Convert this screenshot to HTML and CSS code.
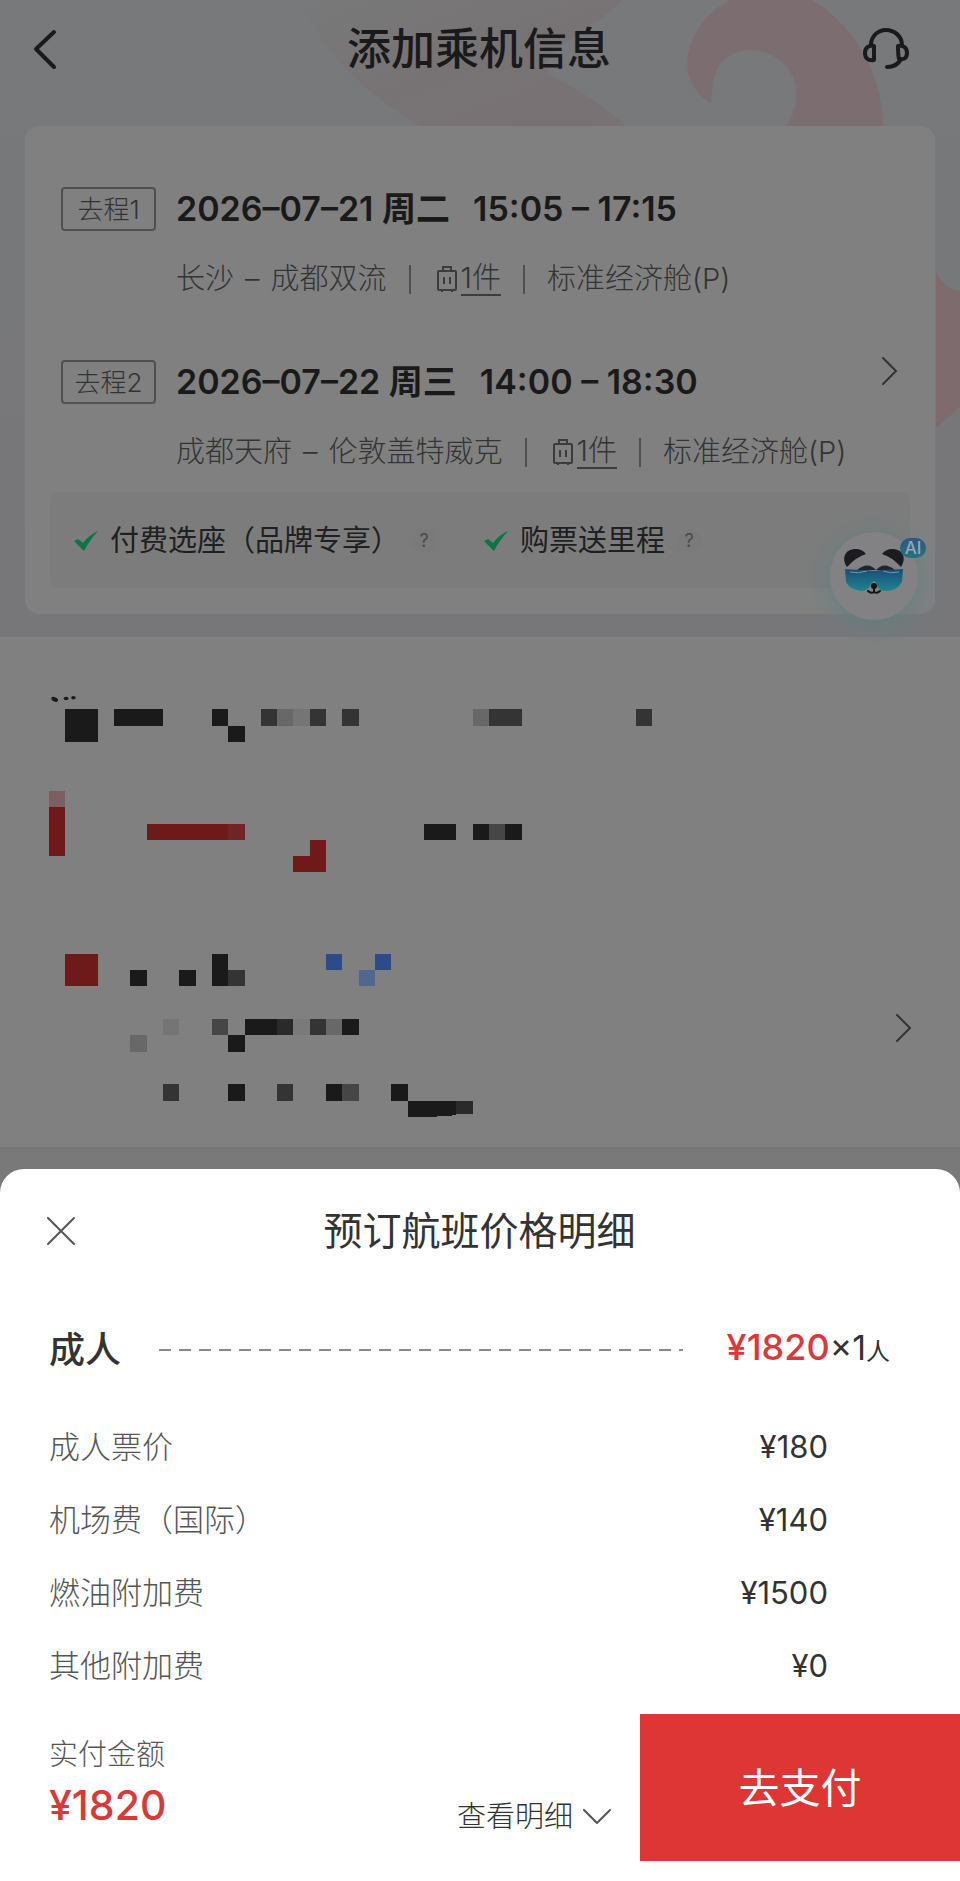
FILE: index.html
```html
<!DOCTYPE html>
<html lang="zh-CN">
<head>
<meta charset="utf-8">
<meta name="viewport" content="width=device-width, initial-scale=1">
<title>添加乘机信息</title>
<link rel="stylesheet" href="styles.css">
</head>
<body>
<div class="app">
  <div class="hero">
    <svg class="hero-art" viewBox="0 0 960 637" preserveAspectRatio="xMaxYMin slice" aria-hidden="true">
      <defs>
        <linearGradient id="ribbon" x1="0" y1="0" x2="1" y2="1">
          <stop offset="0" stop-color="#797475" stop-opacity="0"/>
          <stop offset="0.5" stop-color="#777374"/>
          <stop offset="1" stop-color="#797173"/>
        </linearGradient>
      </defs>
      <path d="M300 0H622C606 16 590 28 570 40C540 58 540 72 566 84C590 96 608 110 626 126H420C360 90 320 50 300 0Z" fill="url(#ribbon)"/>
      <path d="M730 0H812C852 24 882 70 883 126H787C800 104 799 82 787 67C766 42 722 44 714 78C712 87 712 95 711 103C690 92 682 66 691 44C698 24 712 10 730 0Z" fill="#7b6d70"/>
      <path d="M936 272C942 284 950 290 960 291V406C954 412 946 420 936 428Z" fill="#7d6b6e"/>
    </svg>

    <header class="topbar">
      <button class="icon-btn" type="button" aria-label="返回">
        <svg width="26" height="44" viewBox="0 0 26 44" fill="none" stroke="#1a1a1c" stroke-width="4" stroke-linecap="round" stroke-linejoin="round"><path d="M21 5L3 22L21 40"/></svg>
      </button>
      <h1 class="topbar-title">添加乘机信息</h1>
      <button class="icon-btn" type="button" aria-label="客服">
        <svg width="48" height="44" viewBox="0 0 48 44" fill="none" stroke="#1a1a1c" stroke-width="4" stroke-linecap="round" stroke-linejoin="round"><path d="M8 18C8 9 15 3 23 3S39 9 39 18"/><path d="M11 19V33C5 34 2 31 2 26S5 18 11 19Z"/><path d="M35 19C41 18 44 21 44 26S41 33 36 32C35 28 35 24 35 19Z"/><path d="M38 32C35 38 30 40 24 40"/></svg>
      </button>
    </header>

    <section class="card" aria-label="航班信息">
      <div class="card-main">
        <div class="legs">
          <article class="leg">
            <span class="tag">去程1</span>
            <h2 class="leg-time"><span>2026–07–21 周二</span><span>15:05 – 17:15</span></h2>
            <p class="leg-info"><span class="route"><span>长沙</span><span>–</span><span>成都双流</span></span><i class="bar"></i><a class="bag" href="#"><svg width="20" height="26" viewBox="0 0 20 26" fill="none" stroke="#3c3c3c" stroke-width="2"><path d="M6 5V1H14V5"/><rect x="1" y="5" width="18" height="19" rx="1"/><path d="M7 11V18M13 11V18M5 24V26M15 24V26"/></svg><span class="bag-text">1件</span></a><i class="bar"></i><span>标准经济舱(P)</span></p>
          </article>
          <article class="leg">
            <span class="tag">去程2</span>
            <h2 class="leg-time"><span>2026–07–22 周三</span><span>14:00 – 18:30</span></h2>
            <p class="leg-info"><span class="route"><span>成都天府</span><span>–</span><span>伦敦盖特威克</span></span><i class="bar"></i><a class="bag" href="#"><svg width="20" height="26" viewBox="0 0 20 26" fill="none" stroke="#3c3c3c" stroke-width="2"><path d="M6 5V1H14V5"/><rect x="1" y="5" width="18" height="19" rx="1"/><path d="M7 11V18M13 11V18M5 24V26M15 24V26"/></svg><span class="bag-text">1件</span></a><i class="bar"></i><span>标准经济舱(P)</span></p>
          </article>
        </div>
        <button class="icon-btn leg-more" type="button" aria-label="查看航班详情">
          <svg width="16" height="28" viewBox="0 0 16 28" fill="none" stroke="#333" stroke-width="2" stroke-linecap="round"><path d="M1 1L14 14L1 27"/></svg>
        </button>
      </div>
      <ul class="perks">
        <li class="perk"><svg width="24" height="20" viewBox="0 0 24 20" fill="#0d7446"><path d="M0 10L4 8L9 12Q15 4 24 0Q15 10 10 20Z"/></svg><span>付费选座（品牌专享）</span><button class="help" type="button" aria-label="付费选座说明">?</button></li>
        <li class="perk"><svg width="24" height="20" viewBox="0 0 24 20" fill="#0d7446"><path d="M0 10L4 8L9 12Q15 4 24 0Q15 10 10 20Z"/></svg><span>购票送里程</span><button class="help" type="button" aria-label="购票送里程说明">?</button></li>
      </ul>
      <button class="assistant" type="button" aria-label="AI 助手">
        <svg width="88" height="88" viewBox="0 0 88 88">
          <defs><linearGradient id="lens" x1="0" y1="0" x2="0" y2="1"><stop offset="0" stop-color="#1a4c78"/><stop offset="1" stop-color="#1e8590"/></linearGradient></defs>
          <path d="M17 35C11 26 15 17 26 17Q32 17 36 22Q26 25 17 35Z" fill="#1b1b20"/>
          <path d="M71 35C77 26 73 17 62 17Q56 17 52 22Q62 25 71 35Z" fill="#1b1b20"/>
          <path d="M27 38Q38 29 46 38ZM46 38Q54 29 65 38Z" fill="#1f252b"/>
          <path d="M15 37Q28 38 37 38Q44 40 50 38Q60 38 73 37L72 50Q66 60 54 59Q48 58 46 51Q44 47 41 52Q38 59 32 59Q20 58 16 50Z" fill="url(#lens)"/>
          <path d="M20 40Q28 42 37 39M53 39Q60 42 69 40" stroke="#7396a5" stroke-width="1" fill="none"/>
          <ellipse cx="44" cy="54" rx="3" ry="3" fill="#151515"/>
          <path d="M44 56V60M38 59Q41 62 44 60Q47 62 50 59" stroke="#151515" stroke-width="2" fill="none" stroke-linecap="round"/>
        </svg>
        <span class="ai">AI</span>
      </button>
    </section>
  </div>

  <section class="passengers" aria-label="乘机人">
    <!-- Masked personal details: one unit is one mosaic cell -->
    <svg class="mosaic" width="603" height="424" viewBox="0 -1 37 26" fill="#1a1a1a" shape-rendering="crispEdges" aria-hidden="true">
      <g shape-rendering="auto"><ellipse cx=".35" cy="-.62" rx=".22" ry=".13" transform="rotate(25 .35 -.62)"/><ellipse cx="1.05" cy="-.67" rx=".15" ry=".11"/><ellipse cx="1.5" cy="-.72" rx=".14" ry=".11"/></g>
      <path d="M1 0h2v2h-2zM4 0h3v1h-3zM10 0h1v1h-1zM11 1h1v1h-1zM23 7h2v1h-2zM26 7h1v1h-1zM28 7h1v1h-1zM5 16h1v1h-1zM8 16h1v1h-1zM10 15h1v2h-1zM12 19h2v1h-2zM18 19h1v1h-1zM11 20h1v1h-1zM11 23h1v1h-1zM17 23h1v1h-1zM21 23h1v1h-1zM22 24h3v.9l-1.5 .1h-1.5z"/>
      <path d="M13 0h1v1h-1zM16 0h1v1h-1zM18 0h1v1h-1zM27 0h2v1h-2zM36 0h1v1h-1zM11 16h1v1h-1zM16 19h1v1h-1zM7 23h1v1h-1zM14 23h1v1h-1z" fill="#343434"/>
      <path d="M14 19h1v1h-1zM25 24h1v.85h-1z" fill="#2a2a2a"/>
      <path d="M27 7h1v1h-1zM10 19h1v1h-1zM18 23h1v1h-1z" fill="#464646"/>
      <path d="M14 0h1v1h-1zM26 0h1v1h-1zM17 19h1v1h-1zM5 20h1v1h-1z" fill="#686868"/>
      <path d="M15 0h1v1h-1zM7 19h1v1h-1z" fill="#757575"/>
      <path d="M15 19h1v1h-1z" fill="#7a7a7a"/>
      <path d="M0 5h1v1h-1z" fill="#7b6062"/>
      <path d="M0 6h1v3h-1zM6 7h6v1h-6zM16 8h1v2h-2v-1h1zM1 15h2v2h-2z" fill="#6f1a1a"/>
      <path d="M11 7h1v1h-1z" fill="#702427"/>
      <path d="M17 15h1v1h-1zM20 15h1v1h-1z" fill="#2d4b8a"/>
      <path d="M19 16h1v1h-1z" fill="#516690"/>
    </svg>
    <button class="icon-btn passenger-more" type="button" aria-label="编辑乘机人">
      <svg width="16" height="28" viewBox="0 0 16 28" fill="none" stroke="#333" stroke-width="2" stroke-linecap="round"><path d="M1 1L14 14L1 27"/></svg>
    </button>
  </section>

  <section class="sheet" role="dialog" aria-labelledby="sheet-title">
    <div class="sheet-head">
      <button class="icon-btn" type="button" aria-label="关闭">
        <svg width="28" height="28" viewBox="0 0 28 28" fill="none" stroke="#555" stroke-width="2" stroke-linecap="round"><path d="M1 1L27 27M27 1L1 27"/></svg>
      </button>
      <h2 class="sheet-title" id="sheet-title">预订航班价格明细</h2>
    </div>
    <div class="group">
      <h3 class="group-name">成人</h3>
      <span class="dashes"></span>
      <p class="group-price"><strong>¥1820</strong><span>×1</span><small>人</small></p>
    </div>
    <table class="fees">
      <tbody>
        <tr><th scope="row">成人票价</th><td>¥180</td></tr>
        <tr><th scope="row">机场费（国际）</th><td>¥140</td></tr>
        <tr><th scope="row">燃油附加费</th><td>¥1500</td></tr>
        <tr><th scope="row">其他附加费</th><td>¥0</td></tr>
      </tbody>
    </table>
    <footer class="paybar">
      <div class="total"><span class="total-label">实付金额</span><strong class="total-value">¥1820</strong></div>
      <button class="detail" type="button">查看明细<svg width="28" height="16" viewBox="0 0 28 16" fill="none" stroke="#555" stroke-width="2" stroke-linecap="round" stroke-linejoin="round"><path d="M1 1L14 14L27 1"/></svg></button>
      <button class="pay" type="button">去支付</button>
    </footer>
  </section>
</div>
</body>
</html>
```
FILE: styles.css
```css
* { box-sizing: border-box; }

body,
h1, h2, h3, p, ul { margin: 0; padding: 0; }

body {
  background: #797979;
  color: #333;
  font-family: Inter, "Noto Sans CJK SC", sans-serif;
}

button {
  margin: 0;
  padding: 0;
  border: 0;
  background: none;
  color: inherit;
  font: inherit;
}

svg { display: block; }

.app {
  display: flex;
  flex-direction: column;
  min-height: 100vh;
}

.icon-btn {
  display: flex;
  flex: none;
}

/* Header and flight card */
.hero {
  position: relative;
  padding: 0 25px 23px;
  background: linear-gradient(#78797a, #77777a);
}

.hero-art {
  position: absolute;
  inset: 0;
  width: 100%;
  height: 100%;
}

.topbar {
  position: relative;
  display: flex;
  align-items: center;
  justify-content: space-between;
  height: 126px;
  padding: 0 24px 28px 8px;
  color: #1a1a1c;
}

.topbar-title {
  flex: 1;
  padding-left: 36px;
  font-size: 44px;
  line-height: 60px;
  font-weight: 500;
  text-align: center;
}

.card {
  position: relative;
  padding: 61px 25px 26px;
  border-radius: 14px;
  background: #808080;
}

.card-main {
  display: flex;
  align-items: center;
  padding: 0 12px 0 11px;
}

.legs {
  display: flex;
  flex: 1;
  flex-direction: column;
  gap: 59px;
}

.leg {
  display: grid;
  grid-template-columns: 95px 1fr;
  column-gap: 20px;
  row-gap: 26px;
}

.tag {
  height: 44px;
  border: 2px solid #505050;
  border-radius: 4px;
  color: #333;
  font-size: 26px;
  line-height: 42px;
  font-weight: 300;
  text-align: center;
}

.leg-time {
  display: flex;
  gap: 23px;
  color: #1a1a1a;
  font-size: 34px;
  line-height: 44px;
  font-weight: 600;
  white-space: nowrap;
}

.leg-info {
  display: flex;
  grid-column: 2;
  align-items: center;
  color: #343434;
  font-size: 29px;
  line-height: 44px;
  font-weight: 300;
  white-space: nowrap;
}

.route {
  display: flex;
  gap: 11px;
}

.bar {
  width: 2px;
  height: 29px;
  margin: 0 22px;
  background: #505050;
}

.bag {
  display: flex;
  align-items: center;
  gap: 4px;
  padding-left: 4px;
  color: inherit;
  text-decoration: none;
}

.bag-text {
  border-bottom: 2px solid #3c3c3c;
  line-height: 32px;
}

.leg-more { margin-top: 80px; }

.perks {
  display: flex;
  gap: 48px;
  margin-top: 18px;
  padding: 27px 24px 25px;
  border-radius: 8px;
  background: #7c7c7c;
  list-style: none;
}

.perk {
  display: flex;
  align-items: center;
  gap: 12px;
  color: #202020;
  font-size: 29px;
  line-height: 44px;
}

.help {
  width: 24px;
  height: 24px;
  border-radius: 50%;
  background: #7a7a7a;
  color: #4a4a4a;
  font-size: 18px;
  line-height: 24px;
}

.assistant {
  position: absolute;
  right: 17px;
  bottom: -6px;
  width: 88px;
  height: 88px;
  border-radius: 50%;
  background: #828284;
  box-shadow: 0 4px 24px #608080;
}

.ai {
  position: absolute;
  top: 6px;
  right: -8px;
  width: 26px;
  border-radius: 10px;
  background: linear-gradient(#2c5784, #28717c);
  color: #93a9b8;
  font-size: 17px;
  line-height: 20px;
  font-weight: 500;
}

/* Passenger list */
.passengers {
  display: flex;
  align-items: center;
  justify-content: space-between;
  margin-bottom: 22px;
  padding: 56px 48px 30px 49px;
  background: #808080;
}

.passenger-more { margin-top: 246px; }

/* Price sheet */
.sheet {
  display: flex;
  flex: 1;
  flex-direction: column;
  padding-bottom: 20px;
  border-radius: 24px 24px 0 0;
  background: #fff;
}

.sheet-head {
  display: flex;
  align-items: center;
  padding: 32px 76px 32px 47px;
}

.sheet-title {
  flex: 1;
  font-size: 39px;
  line-height: 60px;
  font-weight: 400;
  text-align: center;
}

.group {
  display: flex;
  align-items: center;
  margin-top: 24px;
  padding: 0 70px 0 49px;
}

.group-name {
  font-size: 36px;
  line-height: 60px;
  font-weight: 500;
}

.dashes {
  flex: 1;
  height: 2px;
  margin: 0 44px 0 38px;
  background: repeating-linear-gradient(90deg, #888 0 12px, transparent 12px 20px);
}

.group-price {
  display: flex;
  align-items: baseline;
  font-size: 34px;
  line-height: 60px;
}

.group-price strong {
  color: #d93a39;
  font-size: 36px;
  font-weight: 500;
}

.group-price small { font-size: 24px; }

.fees {
  width: 100%;
  margin-top: 28px;
  border-collapse: collapse;
}

.fees th,
.fees td {
  font-size: 31px;
  line-height: 73px;
  vertical-align: baseline;
}

.fees th {
  padding: 0 0 0 49px;
  color: #555;
  font-weight: 300;
  text-align: left;
}

.fees td {
  padding: 0 132px 0 0;
  text-align: right;
}

.paybar {
  display: flex;
  margin-top: auto;
  padding-left: 49px;
}

.total {
  display: flex;
  flex: 1;
  flex-direction: column;
  padding-top: 21px;
}

.total-label {
  color: #555;
  font-size: 29px;
  line-height: 40px;
  font-weight: 300;
}

.total-value {
  color: #d93a39;
  font-size: 41px;
  line-height: 60px;
  font-weight: 500;
}

.detail {
  display: flex;
  align-items: center;
  align-self: flex-end;
  gap: 10px;
  margin: 0 29px 22px 0;
  font-size: 29px;
  line-height: 44px;
  font-weight: 300;
}

.pay {
  height: 147px;
  flex: 0 0 320px;
  padding-bottom: 6px;
  background: #dd3634;
  color: #fff;
  font-size: 41px;
}
```
